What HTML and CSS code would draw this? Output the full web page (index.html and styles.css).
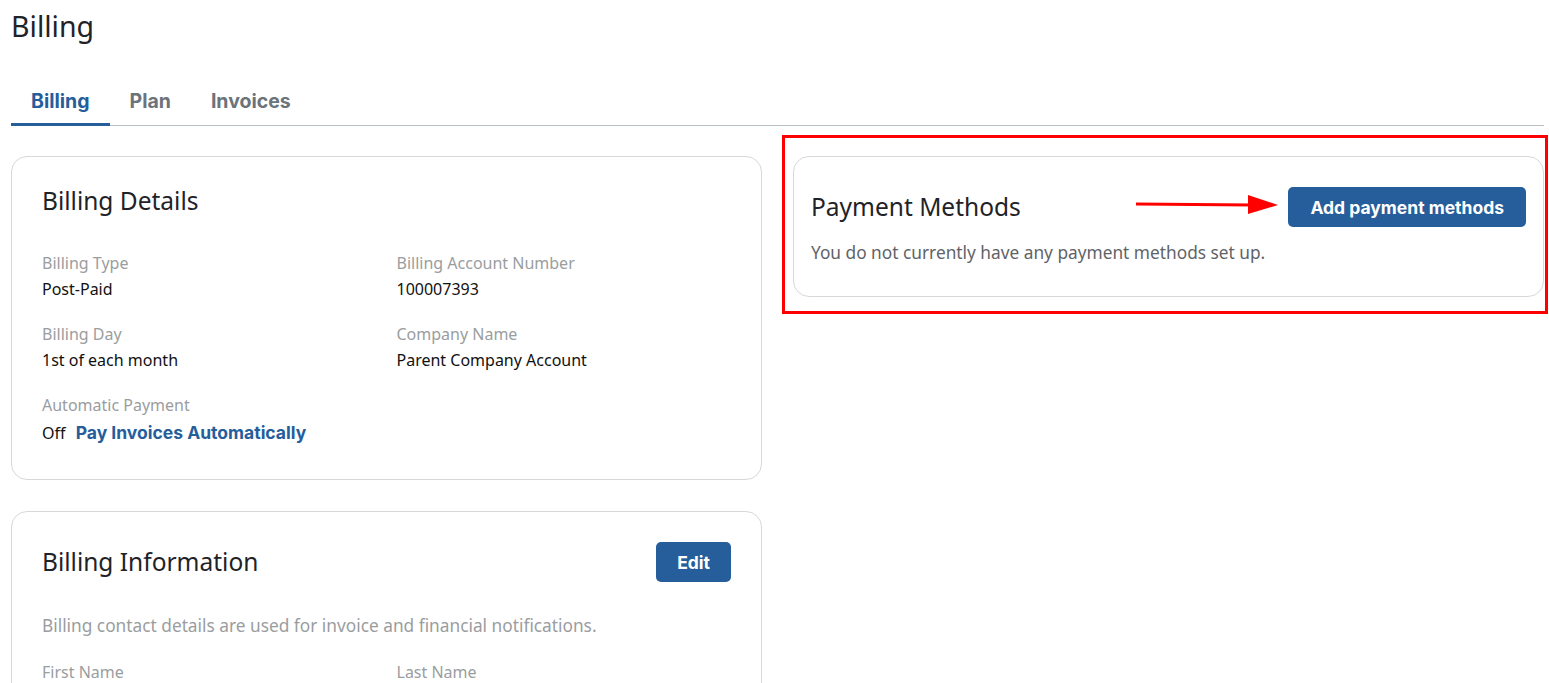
FILE: index.html
```html
<!DOCTYPE html>
<html lang="en">
<head>
  <meta charset="UTF-8" />
  <title>Billing</title>
  <link rel="stylesheet" href="styles.css">
</head>
<body>
  <div class="page">
    <h1 class="page-title">Billing</h1>

    <nav class="tabs">
      <a class="tab active" href="#">Billing</a>
      <a class="tab" href="#">Plan</a>
      <a class="tab" href="#">Invoices</a>
    </nav>

    <div class="columns">
      <div class="col">
        <section class="card">
          <h2 class="card-title">Billing Details</h2>
          <div class="fields">
            <div class="field">
              <div class="label">Billing Type</div>
              <div class="value">Post-Paid</div>
            </div>
            <div class="field">
              <div class="label">Billing Account Number</div>
              <div class="value">100007393</div>
            </div>
            <div class="field">
              <div class="label">Billing Day</div>
              <div class="value">1st of each month</div>
            </div>
            <div class="field">
              <div class="label">Company Name</div>
              <div class="value">Parent Company Account</div>
            </div>
            <div class="field">
              <div class="label">Automatic Payment</div>
              <div class="value value-action">Off <a class="link" href="#">Pay Invoices Automatically</a></div>
            </div>
          </div>
        </section>

        <section class="card card-info">
          <div class="card-head">
            <h2 class="card-title">Billing Information</h2>
            <button class="btn">Edit</button>
          </div>
          <p class="muted">Billing contact details are used for invoice and financial notifications.</p>
          <div class="fields">
            <div class="field">
              <div class="label">First Name</div>
              <div class="value">&nbsp;</div>
            </div>
            <div class="field">
              <div class="label">Last Name</div>
              <div class="value">&nbsp;</div>
            </div>
          </div>
        </section>
      </div>

      <div class="col">
        <div class="highlight-wrap">
          <section class="card card-compact">
            <div class="card-head">
              <h2 class="card-title">Payment Methods</h2>
              <button class="btn">Add payment methods</button>
            </div>
            <p class="note">You do not currently have any payment methods set up.</p>
          </section>
          <div class="highlight-box"></div>
          <svg class="arrow" width="146" height="22" viewBox="0 0 146 22">
            <path d="M0 10 L116 11" stroke="#ff0000" stroke-width="3" fill="none" />
            <polygon points="112,1 142,11 112,20" fill="#ff0000" />
          </svg>
        </div>
      </div>
    </div>
  </div>
</body>
</html>
```

FILE: styles.css
```css
* {
  box-sizing: border-box;
  margin: 0;
  padding: 0;
}

body {
  background: #ffffff;
  color: #1f2327;
  font-family: 'Noto Sans', sans-serif;
  overflow: hidden;
}

.page {
  padding: 6px 5px 0 11px;
}

.page-title {
  font-size: 28.5px;
  font-weight: 400;
  line-height: 40px;
  color: #1f2327;
}

.tabs {
  display: flex;
  margin-top: 34px;
  border-bottom: 1px solid #b9c0c7;
}

.tab {
  padding: 0 20px;
  height: 46px;
  line-height: 42px;
  font-family: 'Inter', sans-serif;
  font-size: 19.5px;
  font-weight: 700;
  color: #6b737b;
  text-decoration: none;
  border-bottom: 3px solid transparent;
  margin-bottom: -1px;
}

.tab.active {
  color: #255e9b;
  border-bottom-color: #255e9b;
}

.columns {
  display: grid;
  grid-template-columns: 1fr 1fr;
  gap: 31px;
  margin-top: 30px;
}

.col {
  display: flex;
  flex-direction: column;
  gap: 31px;
}

.card {
  border: 1px solid #d6d8db;
  border-radius: 16px;
  padding: 26px 30px 35px;
}

.card-info {
  padding-top: 30px;
}

.card-compact {
  padding: 30px 17px 32px;
}

.card-head {
  display: flex;
  align-items: center;
  justify-content: space-between;
}

.card-title {
  font-size: 24.5px;
  font-weight: 400;
  line-height: 36px;
  color: #1f2327;
}

.btn {
  background: #255e9b;
  color: #ffffff;
  border: none;
  border-radius: 5px;
  height: 40px;
  padding: 0 21px;
  font-family: 'Inter', sans-serif;
  font-size: 17.5px;
  font-weight: 700;
  cursor: pointer;
}

.card-compact .btn {
  padding: 0 22px;
}

.fields {
  display: grid;
  grid-template-columns: 1fr 1fr;
  column-gap: 20px;
  row-gap: 23px;
  margin-top: 33px;
}

.label {
  font-size: 16px;
  line-height: 22px;
  color: #9a9da0;
}

.value {
  margin-top: 4px;
  font-size: 16px;
  line-height: 22px;
  height: 22px;
  color: #111;
}

.value-action {
  margin-top: 6px;
}

.link {
  margin-left: 6px;
  font-family: 'Inter', sans-serif;
  font-weight: 700;
  font-size: 17.5px;
  color: #255e9b;
  text-decoration: none;
}

.muted {
  margin-top: 32px;
  font-size: 17.3px;
  line-height: 23px;
  color: #9a9da0;
}

.muted + .fields {
  margin-top: 24px;
}

.note {
  margin-top: 14px;
  font-size: 17.3px;
  color: #5f6368;
}

.highlight-wrap {
  position: relative;
}

.highlight-box {
  position: absolute;
  left: -11px;
  top: -21px;
  right: -4px;
  bottom: -17px;
  border: 3px solid #ff0000;
  pointer-events: none;
}

.arrow {
  position: absolute;
  left: 343px;
  top: 38px;
}
```
